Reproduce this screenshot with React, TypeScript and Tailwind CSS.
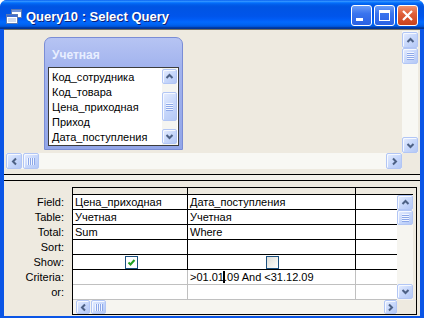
import React from "react";

type Dir = "up" | "down" | "left" | "right";

function Arrow({ dir }: { dir: Dir }) {
  const pts: Record<Dir, string> = {
    up: "1.5,6 4.5,3 7.5,6",
    down: "1.5,3 4.5,6 7.5,3",
    left: "6,1.5 3,4.5 6,7.5",
    right: "3,1.5 6,4.5 3,7.5",
  };
  return (
    <svg width="9" height="9" viewBox="0 0 9 9">
      <polyline points={pts[dir]} fill="none" stroke="#4D6185" strokeWidth="2" />
    </svg>
  );
}

const btnBase =
  "flex items-center justify-center rounded-[2px] border border-[#B2C6F5] bg-[linear-gradient(135deg,#E6EDFE_0%,#C8D8FB_50%,#B4C8F6_100%)] shadow-[inset_1px_1px_0_#F6F9FF]";

function ScrollBtn({ dir, className }: { dir: Dir; className: string }) {
  return (
    <div className={`${btnBase} ${className}`}>
      <Arrow dir={dir} />
    </div>
  );
}

function Thumb({ vertical, className }: { vertical: boolean; className: string }) {
  return (
    <div className={`${btnBase} ${className}`}>
      {vertical ? (
        <svg width="7" height="8" viewBox="0 0 7 8">
          <rect x="0" y="0" width="7" height="1" fill="#F2F6FF" />
          <rect x="0" y="1" width="7" height="1" fill="#8DA8E8" />
          <rect x="0" y="2" width="7" height="1" fill="#F2F6FF" />
          <rect x="0" y="3" width="7" height="1" fill="#8DA8E8" />
          <rect x="0" y="4" width="7" height="1" fill="#F2F6FF" />
          <rect x="0" y="5" width="7" height="1" fill="#8DA8E8" />
          <rect x="0" y="6" width="7" height="1" fill="#F2F6FF" />
          <rect x="0" y="7" width="7" height="1" fill="#8DA8E8" />
        </svg>
      ) : (
        <svg width="8" height="7" viewBox="0 0 8 7">
          <rect y="0" x="0" height="7" width="1" fill="#F2F6FF" />
          <rect y="0" x="1" height="7" width="1" fill="#8DA8E8" />
          <rect y="0" x="2" height="7" width="1" fill="#F2F6FF" />
          <rect y="0" x="3" height="7" width="1" fill="#8DA8E8" />
          <rect y="0" x="4" height="7" width="1" fill="#F2F6FF" />
          <rect y="0" x="5" height="7" width="1" fill="#8DA8E8" />
          <rect y="0" x="6" height="7" width="1" fill="#F2F6FF" />
          <rect y="0" x="7" height="7" width="1" fill="#8DA8E8" />
        </svg>
      )}
    </div>
  );
}

function QueryIcon() {
  return (
    <svg width="16" height="15" viewBox="0 0 16 15">
      <rect x="5.5" y="0.5" width="10" height="8" fill="#fff" stroke="#5A78B4" />
      <rect x="6" y="1" width="9" height="2" fill="#7394DA" />
      <rect x="0.5" y="5.5" width="11" height="9" fill="#fff" stroke="#5A78B4" />
      <rect x="1" y="6" width="10" height="2" fill="#3E6CD0" />
      <line x1="2" y1="10" x2="10" y2="10" stroke="#9FB2DA" />
      <line x1="2" y1="12" x2="10" y2="12" stroke="#9FB2DA" />
    </svg>
  );
}

function Checkbox({ checked }: { checked: boolean }) {
  return (
    <div
      className={`w-[13px] h-[13px] border border-[#1C5180] flex items-center justify-center ${
        checked ? "bg-white" : "bg-[linear-gradient(135deg,#DCDCD7_0%,#F2F2EE_60%,#FFFFFF_100%)]"
      }`}
    >
      {checked && (
        <svg width="9" height="9" viewBox="0 0 9 9">
          <polyline points="1.5,4.5 3.5,6.5 7.5,2" fill="none" stroke="#21A121" strokeWidth="2" />
        </svg>
      )}
    </div>
  );
}

const rows: { label: string; c1: React.ReactNode; c2: React.ReactNode; dark: boolean }[] = [
  { label: "Field:", c1: "Цена_приходная", c2: "Дата_поступления", dark: true },
  { label: "Table:", c1: "Учетная", c2: "Учетная", dark: true },
  { label: "Total:", c1: "Sum", c2: "Where", dark: true },
  { label: "Sort:", c1: "", c2: "", dark: true },
  {
    label: "Show:",
    c1: (
      <div className="w-full h-full flex items-center justify-center pt-[1px]">
        <Checkbox checked={true} />
      </div>
    ),
    c2: (
      <div className="w-full h-full flex items-center justify-center pt-[1px]">
        <Checkbox checked={false} />
      </div>
    ),
    dark: true,
  },
  {
    label: "Criteria:",
    c1: "",
    c2: (
      <span>
        {">01.01"}
        <span className="relative">
          .
          <span className="absolute left-[-1px] top-[0px] w-[2px] h-[12px] bg-black" />
        </span>
        {"09 And <31.12.09"}
      </span>
    ),
    dark: false,
  },
  { label: "or:", c1: "", c2: "", dark: false },
];

export default function App() {
  return (
    <div className="w-[424px] h-[318px] bg-white overflow-hidden font-['Liberation_Sans',Arial,sans-serif] text-black">
      <div className="w-full h-full flex flex-col rounded-t-[7px] overflow-hidden bg-[#0A55E6]">
        {/* Title bar */}
        <div className="h-[29px] shrink-0 flex items-center pt-[2px] pl-[6px] pr-[6px] bg-[linear-gradient(180deg,#0058EE_0%,#3593FF_4%,#288EFF_6%,#127DFF_8%,#036FFC_10%,#0262EE_14%,#0057E5_20%,#0054E3_24%,#0055EB_56%,#005BF5_66%,#026AFE_76%,#0062EF_86%,#0052D6_92%,#0040AB_94%,#003092_100%)]">
          <div className="mt-[1px]">
            <QueryIcon />
          </div>
          <div className="ml-[4px] mt-[2px] text-white font-bold text-[13px] leading-[15px] [text-shadow:1px_1px_0_#0A1F7A] whitespace-nowrap">
            Query10 : Select Query
          </div>
          <div className="ml-auto flex gap-[2px]">
            <div className="relative w-[21px] h-[21px] rounded-[3px] border border-white bg-[linear-gradient(180deg,#6B9CF7_0%,#3A74EE_40%,#2A61E4_100%)]">
              <div className="absolute left-[4px] top-[12px] w-[7px] h-[3px] bg-white" />
            </div>
            <div className="w-[21px] h-[21px] rounded-[3px] border border-white bg-[linear-gradient(180deg,#6B9CF7_0%,#3A74EE_40%,#2A61E4_100%)] flex items-center justify-center">
              <svg width="11" height="11" viewBox="0 0 11 11">
                <rect x="0.5" y="1.5" width="10" height="9" fill="none" stroke="#fff" />
                <rect x="0" y="0" width="11" height="3" fill="#fff" />
              </svg>
            </div>
            <div className="w-[21px] h-[21px] rounded-[3px] border border-white bg-[linear-gradient(180deg,#F0926E_0%,#E0603A_40%,#C8421C_100%)] flex items-center justify-center">
              <svg width="11" height="11" viewBox="0 0 11 11">
                <path d="M1 1 L10 10 M10 1 L1 10" stroke="#fff" strokeWidth="2.2" />
              </svg>
            </div>
          </div>
        </div>

        {/* Body */}
        <div className="flex-1 flex flex-col px-[4px] pb-[4px]">
          <div className="flex-1 flex flex-col bg-[#EEEAE0]">
            {/* Upper pane */}
            <div className="shrink-0 border-t border-[#716F64] px-[2px] pt-[1px] pb-[2px] flex flex-col">
              <div className="h-[122px] flex">
                <div className="flex-1 pl-[38px] pt-[6px]">
                  <div className="w-[139px] h-[113px] rounded-t-[7px] border border-[#7A8DD6] bg-[linear-gradient(180deg,#B6C4F3_0%,#A3B4EE_25%,#92A6E8_100%)] flex flex-col px-[3px] pb-[3px]">
                    <div className="h-[29px] shrink-0 pl-[4px] pt-[10px] text-[12px] leading-[14px] font-bold text-[#E8EEFF]">
                      Учетная
                    </div>
                    <div className="flex-1 bg-white border border-[#3C3C3C] flex overflow-hidden">
                      <div className="flex-1 pt-[2px] pl-[3px] text-[11px] leading-[15px] whitespace-nowrap overflow-hidden">
                        <div>Код_сотрудника</div>
                        <div>Код_товара</div>
                        <div>Цена_приходная</div>
                        <div>Приход</div>
                        <div>Дата_поступления</div>
                      </div>
                      <div className="w-[15px] mr-[1px] flex flex-col py-[1px] bg-[#F5F5F1]">
                        <ScrollBtn dir="up" className="w-[15px] h-[15px]" />
                        <Thumb vertical={true} className="w-[15px] h-[29px] mt-[8px]" />
                        <div className="flex-1" />
                        <ScrollBtn dir="down" className="w-[15px] h-[15px]" />
                      </div>
                    </div>
                  </div>
                </div>
                <div className="w-[16px] flex flex-col pt-[1px] bg-[#F8F8F4]">
                  <ScrollBtn dir="up" className="w-[16px] h-[16px]" />
                  <Thumb vertical={true} className="w-[16px] h-[16px]" />
                  <div className="flex-1" />
                  <ScrollBtn dir="down" className="w-[16px] h-[16px]" />
                </div>
              </div>
              <div className="h-[16px] flex">
                <div className="flex-1 flex bg-[#F8F8F4]">
                  <ScrollBtn dir="left" className="w-[16px] h-[16px]" />
                  <Thumb vertical={false} className="w-[16px] h-[16px] ml-[1px]" />
                  <div className="flex-1" />
                  <ScrollBtn dir="right" className="w-[16px] h-[16px]" />
                </div>
                <div className="w-[16px]" />
              </div>
            </div>

            <div className="h-[3px] shrink-0" />
            {/* Splitter */}
            <div className="h-[7px] shrink-0 border-y border-black bg-[#F4F2EC]" />

            {/* Lower pane */}
            <div className="flex-1 flex pt-[6px] pb-[1px]">
              <div className="w-[61px] mr-[7px] pt-[8px] pr-[1px] text-right text-[11px]">
                {rows.map((r) => (
                  <div key={r.label} className="h-[15px] leading-[14px]">
                    {r.label}
                  </div>
                ))}
              </div>
              <div className="w-[345px] h-[128px] border border-black bg-[#EEEAE0] flex flex-col">
                <div className="h-[112px] flex">
                  <div className="w-[324px] flex flex-col text-[11px]">
                    <div className="h-[7px] flex border-b border-black">
                      <div className="w-[115px] border-r border-black" />
                      <div className="w-[168px] border-r border-black" />
                      <div className="flex-1" />
                    </div>
                    {rows.map((r) => {
                      const bc = r.dark ? "border-black" : "border-[#C0C0C0]";
                      return (
                        <div key={r.label} className={`h-[15px] flex bg-white border-b ${bc}`}>
                          <div className={`w-[115px] border-r ${bc} pl-[2px] leading-[14px] whitespace-nowrap`}>
                            {r.c1}
                          </div>
                          <div className={`w-[168px] border-r ${bc} pl-[2px] leading-[14px] whitespace-nowrap`}>
                            {r.c2}
                          </div>
                          <div className="flex-1" />
                        </div>
                      );
                    })}
                  </div>
                  <div className="w-[16px] flex flex-col">
                    <div className="h-[7px] border-b border-black" />
                    <div className="flex-1 flex flex-col bg-[#F6F5F0] pb-[1px]">
                      <ScrollBtn dir="up" className="w-[16px] h-[15px]" />
                      <Thumb vertical={true} className="w-[16px] h-[15px]" />
                      <div className="flex-1" />
                      <ScrollBtn dir="down" className="w-[16px] h-[15px]" />
                    </div>
                  </div>
                  <div className="w-[3px]" />
                </div>
                <div className="h-[14px] flex">
                  <div className="w-[324px] flex pl-[3px] bg-[#F6F5F0]">
                    <ScrollBtn dir="left" className="w-[14px] h-[14px]" />
                    <Thumb vertical={false} className="w-[15px] h-[14px] ml-[1px]" />
                    <div className="flex-1" />
                    <ScrollBtn dir="right" className="w-[13px] h-[14px]" />
                  </div>
                  <div className="flex-1" />
                </div>
              </div>
            </div>
          </div>
        </div>
      </div>
    </div>
  );
}
